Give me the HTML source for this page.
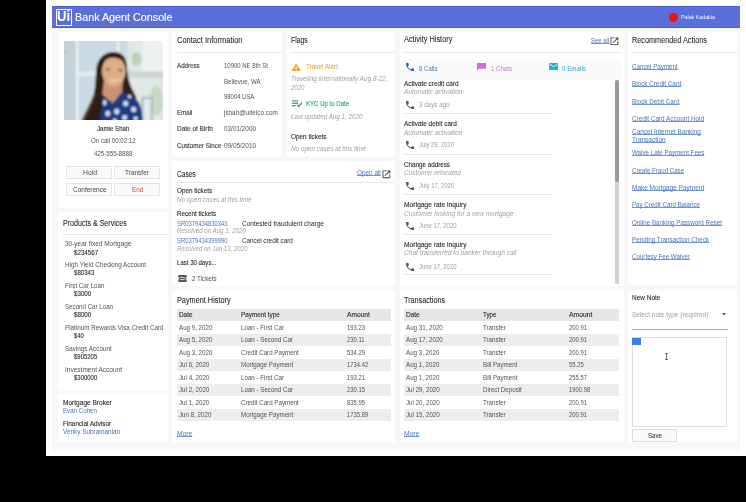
<!DOCTYPE html>
<html><head><meta charset="utf-8"><style>
html,body{margin:0;padding:0;width:746px;height:502px;overflow:hidden;background:#000;}
body{position:relative;font-family:"Liberation Sans",sans-serif;}
.t{position:absolute;white-space:nowrap;line-height:10px;}
.r{position:absolute;}
</style></head><body><div id="app" style="position:absolute;left:0;top:0;width:746px;height:502px;will-change:transform;background:#000">
<div class="r" style="left:46px;top:0px;width:700.00px;height:455.50px;background:#fff;"></div>
<div class="r" style="left:52px;top:6px;width:688.00px;height:443.60px;background:#f7f7fa;"></div>
<div class="r" style="left:52px;top:6px;width:688.00px;height:22.00px;background:#5b6fda;"></div>
<div class="r" style="left:52px;top:6px;width:688.00px;height:0.90px;background:#4a5cd8;"></div>
<div class="r" style="left:52px;top:27.1px;width:688.00px;height:0.90px;background:#4d5ecb;"></div>
<div class="r" style="left:55.5px;top:9px;width:16.50px;height:17.00px;background:transparent;border:1.7px solid #fff;box-sizing:border-box"></div>
<div class="t" style="left:57.3px;top:10.60px;font-size:14px;color:#fff;font-weight:bold;font-style:normal;transform:scaleX(0.9357);transform-origin:0 0;">Ui</div>
<div class="t" style="left:75px;top:12.10px;font-size:10.8px;color:#fff;font-weight:normal;font-style:normal;transform:scaleX(0.9965);transform-origin:0 0;-webkit-text-stroke:0.12px #fff;">Bank Agent Console</div>
<div class="r" style="left:668.8px;top:12.6px;width:9px;height:9px;border-radius:50%;background:#f41010"></div>
<div class="t" style="left:680.7px;top:12.80px;font-size:4.9px;color:#f4f5fc;font-weight:normal;font-style:normal;transform:scaleX(1.0837);transform-origin:0 0;">Palak Kadakia</div>
<div class="r" style="left:58px;top:32px;width:110.40px;height:175.60px;background:#fff;"></div>
<div class="r" style="left:58px;top:212.2px;width:110.40px;height:178.80px;background:#fff;"></div>
<div class="r" style="left:58px;top:394.3px;width:110.40px;height:48.00px;background:#fff;"></div>
<div class="r" style="left:172.4px;top:32px;width:109.30px;height:124.70px;background:#fff;"></div>
<div class="r" style="left:286.7px;top:32px;width:108.80px;height:124.70px;background:#fff;"></div>
<div class="r" style="left:172.4px;top:160.9px;width:222.60px;height:124.90px;background:#fff;"></div>
<div class="r" style="left:172.4px;top:290.4px;width:222.40px;height:152.10px;background:#fff;"></div>
<div class="r" style="left:400.1px;top:32px;width:223.90px;height:253.80px;background:#fff;"></div>
<div class="r" style="left:400.1px;top:290.4px;width:223.90px;height:152.10px;background:#fff;"></div>
<div class="r" style="left:628.4px;top:32px;width:108.60px;height:252.50px;background:#fff;"></div>
<div class="r" style="left:628.4px;top:289.6px;width:108.60px;height:152.90px;background:#fff;"></div>
<svg class="r" style="left:63.7px;top:40.5px" width="99.5" height="79.5" viewBox="0 0 100 80" preserveAspectRatio="none">
<defs><filter id="bl" x="-5%" y="-5%" width="110%" height="110%"><feGaussianBlur stdDeviation="0.9"/></filter><clipPath id="cp"><rect width="100" height="80"/></clipPath></defs>
<g clip-path="url(#cp)"><g filter="url(#bl)">
<rect x="-2" y="-2" width="104" height="84" fill="#c9dae3"/>
<rect x="-2" y="-2" width="14" height="84" fill="#c4d2d6"/>
<rect x="12" y="-2" width="2.4" height="84" fill="#f0f4f6"/>
<rect x="53.3" y="-2" width="2" height="13.5" fill="#eef3f5"/>
<rect x="14.4" y="30.5" width="22" height="5" fill="#e0eaee"/>
<circle cx="1.8" cy="11" r="1.2" fill="#e08a50"/>
<rect x="64" y="-2" width="38" height="84" fill="#e1e7e5"/>
<rect x="79" y="-2" width="23" height="33" fill="#eef1f1"/>
<ellipse cx="73" cy="18" rx="5" ry="7" fill="#bfcfbb"/>
<rect x="62" y="30.5" width="40" height="6.5" fill="#cbd6d1"/>
<ellipse cx="93" cy="60" rx="7" ry="15" fill="#c9d7c6"/>
<path d="M77.5 56 L89.5 56 L89.5 82 L77.5 82 Z" fill="#aebdca"/>
<rect x="80" y="58.5" width="7" height="24" fill="#e4e9ec"/>
<path d="M17 82 C21 72 27 63 30 53 C32 45 31.5 36 32.5 28 C33.5 18 40 11 50 11 C58 11 62.5 16 63 24 C63.5 32 64.5 38 67 45 C69 50 72 54 73 58 L62 64 L40 64 L38 82 Z" fill="#2f1f15"/>
<path d="M17 82 C21 72 27 63 30 53 L32 54 C29 64 24 73 20 82 Z" fill="#5a3c28"/>
<path d="M40 40 L59 40 L58.5 53 L49 63 L38.5 54 Z" fill="#c99373"/>
<ellipse cx="50" cy="30.5" rx="11.8" ry="15.5" fill="#ddae89"/>
<path d="M37.5 24 C39 15 45 12.5 50.5 12.5 C57 12.5 61.5 16 62.5 24 C58 18 53 16.5 47 17 C42 17.5 39 20 37.5 24 Z" fill="#2f1f15"/>
<ellipse cx="44" cy="28.5" rx="2.3" ry="0.9" fill="#4a3020"/><ellipse cx="56.5" cy="29.5" rx="2.3" ry="0.9" fill="#4a3020"/>
<path d="M45 37.5 C48 40.5 54 40.5 57 37.5 C55 41.8 47.5 41.8 45 37.5 Z" fill="#f6f1ea"/>
<path d="M37 82 C37 70 38 61 40 55 L49 63 L57.5 52 C64 52 71 56 75.5 62 C78 68 79 75 79 82 Z" fill="#1a3a80"/>
<g fill="#cfdaee">
<ellipse cx="41" cy="62" rx="1.8" ry="3"/><ellipse cx="44" cy="73" rx="2.4" ry="2.8"/><ellipse cx="53" cy="71" rx="2.6" ry="3"/>
<ellipse cx="62" cy="63" rx="2.6" ry="2.8"/><ellipse cx="70" cy="69" rx="2.6" ry="2.8"/><ellipse cx="61" cy="77" rx="2.6" ry="2.6"/>
<ellipse cx="72" cy="78" rx="2.2" ry="2.4"/><ellipse cx="51" cy="80" rx="2.2" ry="2"/><ellipse cx="66" cy="56" rx="1.8" ry="1.8"/>
</g>
</g></g></svg>
<div class="t" style="left:97.2px;top:123.90px;font-size:7px;color:#282828;font-weight:normal;font-style:normal;transform:scaleX(0.8764);transform-origin:0 0;-webkit-text-stroke:0.1px currentColor;">Jamie Shah</div>
<div class="t" style="left:91.1px;top:136.30px;font-size:6.8px;color:#525252;font-weight:normal;font-style:normal;transform:scaleX(0.9030);transform-origin:0 0;">On call 00:02:12</div>
<div class="t" style="left:94.3px;top:149.40px;font-size:6.8px;color:#525252;font-weight:normal;font-style:normal;transform:scaleX(0.9048);transform-origin:0 0;">425-555-8888</div>
<div class="r" style="left:66.3px;top:165.8px;width:45.80px;height:12.90px;background:#fafafa;border:0.7px solid #e6e6e6;box-sizing:border-box;"></div>
<div class="r" style="left:114.3px;top:165.8px;width:45.60px;height:12.90px;background:#fafafa;border:0.7px solid #e6e6e6;box-sizing:border-box;"></div>
<div class="r" style="left:66.3px;top:183.3px;width:45.80px;height:12.70px;background:#fafafa;border:0.7px solid #e6e6e6;box-sizing:border-box;"></div>
<div class="r" style="left:114.3px;top:183.3px;width:45.60px;height:12.70px;background:#fafafa;border:0.7px solid #e6e6e6;box-sizing:border-box;"></div>
<div class="t" style="left:82.8px;top:167.90px;font-size:6.8px;color:#474747;font-weight:normal;font-style:normal;transform:scaleX(0.9940);transform-origin:0 0;">Hold</div>
<div class="t" style="left:125.4px;top:167.90px;font-size:6.8px;color:#474747;font-weight:normal;font-style:normal;transform:scaleX(0.9536);transform-origin:0 0;">Transfer</div>
<div class="t" style="left:72.8px;top:184.80px;font-size:6.8px;color:#474747;font-weight:normal;font-style:normal;transform:scaleX(0.9533);transform-origin:0 0;">Conference</div>
<div class="t" style="left:131.8px;top:184.80px;font-size:6.8px;color:#b8582e;font-weight:normal;font-style:normal;transform:scaleX(0.9261);transform-origin:0 0;">End</div>
<div class="t" style="left:62.7px;top:217.60px;font-size:8.5px;color:#282828;font-weight:normal;font-style:normal;transform:scaleX(0.8336);transform-origin:0 0;-webkit-text-stroke:0.08px currentColor;">Products &amp; Services</div>
<div class="r" style="left:62.7px;top:234.1px;width:105.30px;height:0.60px;background:#e8e8e8;"></div>
<div class="t" style="left:64.8px;top:239.10px;font-size:6.8px;color:#525252;font-weight:normal;font-style:normal;transform:scaleX(0.9513);transform-origin:0 0;">30-year fixed Mortgage</div>
<div class="t" style="left:73.7px;top:247.50px;font-size:6.8px;color:#282828;font-weight:normal;font-style:normal;transform:scaleX(0.9105);transform-origin:0 0;-webkit-text-stroke:0.1px currentColor;">$234567</div>
<div class="t" style="left:64.8px;top:260.10px;font-size:6.8px;color:#525252;font-weight:normal;font-style:normal;transform:scaleX(0.9320);transform-origin:0 0;">High Yield Checking Account</div>
<div class="t" style="left:73.7px;top:268.40px;font-size:6.8px;color:#282828;font-weight:normal;font-style:normal;transform:scaleX(0.8992);transform-origin:0 0;-webkit-text-stroke:0.1px currentColor;">$80343</div>
<div class="t" style="left:64.8px;top:281.00px;font-size:6.8px;color:#525252;font-weight:normal;font-style:normal;transform:scaleX(0.9173);transform-origin:0 0;">First Car Loan</div>
<div class="t" style="left:73.7px;top:289.30px;font-size:6.8px;color:#282828;font-weight:normal;font-style:normal;transform:scaleX(0.9098);transform-origin:0 0;-webkit-text-stroke:0.1px currentColor;">$3000</div>
<div class="t" style="left:64.8px;top:301.60px;font-size:6.8px;color:#525252;font-weight:normal;font-style:normal;transform:scaleX(0.9073);transform-origin:0 0;">Second Car Loan</div>
<div class="t" style="left:73.7px;top:310.10px;font-size:6.8px;color:#282828;font-weight:normal;font-style:normal;transform:scaleX(0.9098);transform-origin:0 0;-webkit-text-stroke:0.1px currentColor;">$8000</div>
<div class="t" style="left:64.8px;top:322.70px;font-size:6.8px;color:#525252;font-weight:normal;font-style:normal;transform:scaleX(0.9234);transform-origin:0 0;">Platinum Rewards Visa Credit Card</div>
<div class="t" style="left:73.7px;top:331.10px;font-size:6.8px;color:#282828;font-weight:normal;font-style:normal;transform:scaleX(0.8463);transform-origin:0 0;-webkit-text-stroke:0.1px currentColor;">$40</div>
<div class="t" style="left:64.8px;top:343.80px;font-size:6.8px;color:#525252;font-weight:normal;font-style:normal;transform:scaleX(0.9291);transform-origin:0 0;">Savings Account</div>
<div class="t" style="left:73.7px;top:352.10px;font-size:6.8px;color:#282828;font-weight:normal;font-style:normal;transform:scaleX(0.8765);transform-origin:0 0;-webkit-text-stroke:0.1px currentColor;">$905205</div>
<div class="t" style="left:64.8px;top:364.60px;font-size:6.8px;color:#525252;font-weight:normal;font-style:normal;transform:scaleX(0.9608);transform-origin:0 0;">Investment Account</div>
<div class="t" style="left:73.7px;top:373.00px;font-size:6.8px;color:#282828;font-weight:normal;font-style:normal;transform:scaleX(0.8765);transform-origin:0 0;-webkit-text-stroke:0.1px currentColor;">$300000</div>
<div class="t" style="left:62.7px;top:398.30px;font-size:6.8px;color:#282828;font-weight:normal;font-style:normal;transform:scaleX(0.9640);transform-origin:0 0;-webkit-text-stroke:0.1px currentColor;">Mortgage Broker</div>
<div class="t" style="left:62.7px;top:406.40px;font-size:6.8px;color:#4677c0;font-weight:normal;font-style:normal;transform:scaleX(0.9086);transform-origin:0 0;">Evan Cohen</div>
<div class="t" style="left:62.7px;top:419.10px;font-size:6.8px;color:#282828;font-weight:normal;font-style:normal;transform:scaleX(0.9360);transform-origin:0 0;-webkit-text-stroke:0.1px currentColor;">Financial Advisor</div>
<div class="t" style="left:62.7px;top:427.00px;font-size:6.8px;color:#4677c0;font-weight:normal;font-style:normal;transform:scaleX(0.9401);transform-origin:0 0;">Venky Subramanian</div>
<div class="t" style="left:176.8px;top:35.30px;font-size:8.5px;color:#282828;font-weight:normal;font-style:normal;transform:scaleX(0.8829);transform-origin:0 0;-webkit-text-stroke:0.08px currentColor;">Contact Information</div>
<div class="r" style="left:176.8px;top:52px;width:105.00px;height:0.60px;background:#e8e8e8;"></div>
<div class="t" style="left:176.8px;top:60.80px;font-size:6.8px;color:#333;font-weight:normal;font-style:normal;transform:scaleX(0.9103);transform-origin:0 0;-webkit-text-stroke:0.1px currentColor;">Address</div>
<div class="t" style="left:224.2px;top:60.80px;font-size:6.8px;color:#525252;font-weight:normal;font-style:normal;transform:scaleX(0.8799);transform-origin:0 0;">10900 NE 8th St</div>
<div class="t" style="left:224.2px;top:76.60px;font-size:6.8px;color:#525252;font-weight:normal;font-style:normal;transform:scaleX(0.9051);transform-origin:0 0;">Bellevue, WA</div>
<div class="t" style="left:224.2px;top:91.50px;font-size:6.8px;color:#525252;font-weight:normal;font-style:normal;transform:scaleX(0.8716);transform-origin:0 0;">98004 USA</div>
<div class="t" style="left:176.8px;top:108.00px;font-size:6.8px;color:#333;font-weight:normal;font-style:normal;transform:scaleX(0.9059);transform-origin:0 0;-webkit-text-stroke:0.1px currentColor;">Email</div>
<div class="t" style="left:224.2px;top:108.00px;font-size:6.8px;color:#525252;font-weight:normal;font-style:normal;transform:scaleX(0.9334);transform-origin:0 0;">jshah@uitelco.com</div>
<div class="t" style="left:176.8px;top:124.10px;font-size:6.8px;color:#333;font-weight:normal;font-style:normal;transform:scaleX(0.9476);transform-origin:0 0;-webkit-text-stroke:0.1px currentColor;">Date of Birth</div>
<div class="t" style="left:224.2px;top:124.10px;font-size:6.8px;color:#525252;font-weight:normal;font-style:normal;transform:scaleX(0.9403);transform-origin:0 0;">03/01/2000</div>
<div class="t" style="left:176.8px;top:140.50px;font-size:6.8px;color:#333;font-weight:normal;font-style:normal;transform:scaleX(0.9181);transform-origin:0 0;-webkit-text-stroke:0.1px currentColor;">Customer Since</div>
<div class="t" style="left:224.2px;top:140.50px;font-size:6.8px;color:#525252;font-weight:normal;font-style:normal;transform:scaleX(0.9403);transform-origin:0 0;">09/05/2010</div>
<div class="t" style="left:290.8px;top:35.30px;font-size:8.5px;color:#282828;font-weight:normal;font-style:normal;transform:scaleX(0.8030);transform-origin:0 0;-webkit-text-stroke:0.08px currentColor;">Flags</div>
<div class="r" style="left:290.8px;top:52px;width:104.20px;height:0.60px;background:#e8e8e8;"></div>
<svg class="r" style="left:291.4px;top:62.6px" width="10.4" height="8.8" viewBox="0 0 12 10"><path d="M6 0.3 L11.8 9.8 H0.2 Z" fill="#f5a524"/><rect x="5.45" y="3.6" width="1.1" height="3.4" fill="#fff"/><rect x="5.45" y="7.7" width="1.1" height="1.1" fill="#fff"/></svg>
<div class="t" style="left:305.7px;top:62.10px;font-size:6.8px;color:#ea9a2c;font-weight:normal;font-style:normal;transform:scaleX(0.9348);transform-origin:0 0;">Travel Alert</div>
<div class="t" style="left:290.8px;top:74.10px;font-size:6.8px;color:#a0a0a0;font-weight:normal;font-style:italic;transform:scaleX(0.9434);transform-origin:0 0;">Traveling internationally Aug 8-22,</div>
<div class="t" style="left:290.8px;top:82.90px;font-size:6.8px;color:#a0a0a0;font-weight:normal;font-style:italic;transform:scaleX(0.8926);transform-origin:0 0;">2020</div>
<svg class="r" style="left:291.6px;top:100.4px" width="10.5" height="7.4" viewBox="0 0 13 9"><rect x="0" y="0.3" width="7.5" height="1.4" fill="#23996a"/><rect x="0" y="3.3" width="7.5" height="1.4" fill="#23996a"/><rect x="0" y="6.3" width="4.5" height="1.4" fill="#23996a"/><path d="M6.3 5.8 L8.3 7.8 L12.5 3.3" stroke="#23996a" stroke-width="1.5" fill="none"/></svg>
<div class="t" style="left:305.7px;top:99.30px;font-size:6.8px;color:#23996a;font-weight:normal;font-style:normal;transform:scaleX(0.8912);transform-origin:0 0;-webkit-text-stroke:0.1px currentColor;">KYC Up to Date</div>
<div class="t" style="left:290.8px;top:111.60px;font-size:6.8px;color:#a0a0a0;font-weight:normal;font-style:italic;transform:scaleX(0.9200);transform-origin:0 0;">Last updated Aug 1, 2020</div>
<div class="t" style="left:290.8px;top:131.70px;font-size:6.8px;color:#282828;font-weight:normal;font-style:normal;transform:scaleX(0.9396);transform-origin:0 0;-webkit-text-stroke:0.1px currentColor;">Open tickets</div>
<div class="t" style="left:290.8px;top:143.80px;font-size:6.8px;color:#a0a0a0;font-weight:normal;font-style:italic;transform:scaleX(0.9352);transform-origin:0 0;">No open cases at this time</div>
<div class="t" style="left:176.8px;top:169.00px;font-size:8.5px;color:#282828;font-weight:normal;font-style:normal;transform:scaleX(0.7720);transform-origin:0 0;-webkit-text-stroke:0.08px currentColor;">Cases</div>
<div class="t" style="left:357.3px;top:167.80px;font-size:6.8px;color:#4677c0;font-weight:normal;font-style:normal;transform:scaleX(0.9397);transform-origin:0 0;text-decoration:underline;text-decoration-thickness:0.55px;text-underline-offset:0.2px;text-decoration-color:#6f95d0;text-decoration-skip-ink:none;">Open all</div>
<svg class="r" style="left:382.3px;top:170.4px" width="8.8" height="8.6" viewBox="2 2 20 20"><path fill="#3a3a3a" d="M19 19H5V5h7V3H5c-1.11 0-2 .9-2 2v14c0 1.1.89 2 2 2h14c1.1 0 2-.9 2-2v-7h-2v7zM14 3v2h3.59l-9.83 9.83 1.41 1.41L19 6.41V10h2V3h-7z"/></svg>
<div class="r" style="left:176.8px;top:181.8px;width:217.70px;height:0.60px;background:#e8e8e8;"></div>
<div class="t" style="left:176.8px;top:186.40px;font-size:6.8px;color:#282828;font-weight:normal;font-style:normal;transform:scaleX(0.9317);transform-origin:0 0;-webkit-text-stroke:0.1px currentColor;">Open tickets</div>
<div class="t" style="left:176.8px;top:194.90px;font-size:6.8px;color:#a0a0a0;font-weight:normal;font-style:italic;transform:scaleX(0.9302);transform-origin:0 0;">No open cases at this time</div>
<div class="t" style="left:176.8px;top:208.90px;font-size:6.8px;color:#282828;font-weight:normal;font-style:normal;transform:scaleX(0.9160);transform-origin:0 0;-webkit-text-stroke:0.1px currentColor;">Recent tickets</div>
<div class="t" style="left:176.6px;top:218.50px;font-size:6.8px;color:#4677c0;font-weight:normal;font-style:normal;transform:scaleX(0.8619);transform-origin:0 0;">SR0379434830343</div>
<div class="t" style="left:242.2px;top:218.50px;font-size:6.8px;color:#282828;font-weight:normal;font-style:normal;transform:scaleX(0.9548);transform-origin:0 0;">Contested fraudulent charge</div>
<div class="t" style="left:176.6px;top:226.10px;font-size:6.8px;color:#a0a0a0;font-weight:normal;font-style:italic;transform:scaleX(0.9028);transform-origin:0 0;">Resolved on Aug 1, 2020</div>
<div class="t" style="left:176.6px;top:236.40px;font-size:6.8px;color:#4677c0;font-weight:normal;font-style:normal;transform:scaleX(0.8619);transform-origin:0 0;">SR0379434399990</div>
<div class="t" style="left:242.2px;top:236.40px;font-size:6.8px;color:#282828;font-weight:normal;font-style:normal;transform:scaleX(0.9273);transform-origin:0 0;">Cancel credit card</div>
<div class="t" style="left:176.6px;top:243.90px;font-size:6.8px;color:#a0a0a0;font-weight:normal;font-style:italic;transform:scaleX(0.8913);transform-origin:0 0;">Resolved on Jun 13, 2020</div>
<div class="t" style="left:176.8px;top:258.30px;font-size:6.8px;color:#282828;font-weight:normal;font-style:normal;transform:scaleX(0.8933);transform-origin:0 0;-webkit-text-stroke:0.1px currentColor;">Last 30 days...</div>
<svg class="r" style="left:178.4px;top:274.9px" width="9" height="7" viewBox="0 0 9 7"><path d="M0.3 0 H8.7 V2.4 A1.1 1.1 0 0 0 8.7 4.6 V7 H0.3 V4.6 A1.1 1.1 0 0 0 0.3 2.4 Z" fill="#5c5c5c"/><rect x="2.2" y="2.2" width="4.6" height="0.7" fill="#fff"/><rect x="2.2" y="4.1" width="4.6" height="0.7" fill="#fff"/></svg>
<div class="t" style="left:191.7px;top:273.60px;font-size:6.8px;color:#525252;font-weight:normal;font-style:normal;transform:scaleX(0.9169);transform-origin:0 0;">2 Tickets</div>
<div class="t" style="left:176.8px;top:294.70px;font-size:8.5px;color:#282828;font-weight:normal;font-style:normal;transform:scaleX(0.8595);transform-origin:0 0;-webkit-text-stroke:0.08px currentColor;">Payment History</div>
<div class="r" style="left:176.5px;top:308.9px;width:214.50px;height:11.90px;background:#e6e6e6;"></div>
<div class="t" style="left:178.8px;top:310.40px;font-size:6.8px;color:#282828;font-weight:normal;font-style:normal;transform:scaleX(0.9402);transform-origin:0 0;-webkit-text-stroke:0.1px currentColor;">Date</div>
<div class="t" style="left:241.2px;top:310.40px;font-size:6.8px;color:#282828;font-weight:normal;font-style:normal;transform:scaleX(0.9311);transform-origin:0 0;-webkit-text-stroke:0.1px currentColor;">Payment type</div>
<div class="t" style="left:347.2px;top:310.40px;font-size:6.8px;color:#282828;font-weight:normal;font-style:normal;transform:scaleX(0.9771);transform-origin:0 0;-webkit-text-stroke:0.1px currentColor;">Amount</div>
<div class="t" style="left:178.8px;top:322.70px;font-size:6.8px;color:#525252;font-weight:normal;font-style:normal;transform:scaleX(0.9100);transform-origin:0 0;">Aug 9, 2020</div>
<div class="t" style="left:241.2px;top:322.70px;font-size:6.8px;color:#525252;font-weight:normal;font-style:normal;transform:scaleX(0.9100);transform-origin:0 0;">Loan - First Car</div>
<div class="t" style="left:347.2px;top:322.70px;font-size:6.8px;color:#525252;font-weight:normal;font-style:normal;transform:scaleX(0.8600);transform-origin:0 0;">193.23</div>
<div class="r" style="left:176.5px;top:333.87px;width:214.50px;height:11.87px;background:#ededed;"></div>
<div class="t" style="left:178.8px;top:335.17px;font-size:6.8px;color:#525252;font-weight:normal;font-style:normal;transform:scaleX(0.9100);transform-origin:0 0;">Aug 5, 2020</div>
<div class="t" style="left:241.2px;top:335.17px;font-size:6.8px;color:#525252;font-weight:normal;font-style:normal;transform:scaleX(0.9100);transform-origin:0 0;">Loan - Second Car</div>
<div class="t" style="left:347.2px;top:335.17px;font-size:6.8px;color:#525252;font-weight:normal;font-style:normal;transform:scaleX(0.8600);transform-origin:0 0;">230.11</div>
<div class="t" style="left:178.8px;top:347.64px;font-size:6.8px;color:#525252;font-weight:normal;font-style:normal;transform:scaleX(0.9100);transform-origin:0 0;">Aug 3, 2020</div>
<div class="t" style="left:241.2px;top:347.64px;font-size:6.8px;color:#525252;font-weight:normal;font-style:normal;transform:scaleX(0.9100);transform-origin:0 0;">Credit Card Payment</div>
<div class="t" style="left:347.2px;top:347.64px;font-size:6.8px;color:#525252;font-weight:normal;font-style:normal;transform:scaleX(0.8600);transform-origin:0 0;">534.29</div>
<div class="r" style="left:176.5px;top:358.81px;width:214.50px;height:11.87px;background:#ededed;"></div>
<div class="t" style="left:178.8px;top:360.11px;font-size:6.8px;color:#525252;font-weight:normal;font-style:normal;transform:scaleX(0.9100);transform-origin:0 0;">Jul 6, 2020</div>
<div class="t" style="left:241.2px;top:360.11px;font-size:6.8px;color:#525252;font-weight:normal;font-style:normal;transform:scaleX(0.9100);transform-origin:0 0;">Mortgage Payment</div>
<div class="t" style="left:347.2px;top:360.11px;font-size:6.8px;color:#525252;font-weight:normal;font-style:normal;transform:scaleX(0.8600);transform-origin:0 0;">1734.42</div>
<div class="t" style="left:178.8px;top:372.58px;font-size:6.8px;color:#525252;font-weight:normal;font-style:normal;transform:scaleX(0.9100);transform-origin:0 0;">Jul 4, 2020</div>
<div class="t" style="left:241.2px;top:372.58px;font-size:6.8px;color:#525252;font-weight:normal;font-style:normal;transform:scaleX(0.9100);transform-origin:0 0;">Loan - First Car</div>
<div class="t" style="left:347.2px;top:372.58px;font-size:6.8px;color:#525252;font-weight:normal;font-style:normal;transform:scaleX(0.8600);transform-origin:0 0;">193.21</div>
<div class="r" style="left:176.5px;top:383.75px;width:214.50px;height:11.87px;background:#ededed;"></div>
<div class="t" style="left:178.8px;top:385.05px;font-size:6.8px;color:#525252;font-weight:normal;font-style:normal;transform:scaleX(0.9100);transform-origin:0 0;">Jul 2, 2020</div>
<div class="t" style="left:241.2px;top:385.05px;font-size:6.8px;color:#525252;font-weight:normal;font-style:normal;transform:scaleX(0.9100);transform-origin:0 0;">Loan - Second Car</div>
<div class="t" style="left:347.2px;top:385.05px;font-size:6.8px;color:#525252;font-weight:normal;font-style:normal;transform:scaleX(0.8600);transform-origin:0 0;">230.15</div>
<div class="t" style="left:178.8px;top:397.52px;font-size:6.8px;color:#525252;font-weight:normal;font-style:normal;transform:scaleX(0.9100);transform-origin:0 0;">Jul 1, 2020</div>
<div class="t" style="left:241.2px;top:397.52px;font-size:6.8px;color:#525252;font-weight:normal;font-style:normal;transform:scaleX(0.9100);transform-origin:0 0;">Credit Card Payment</div>
<div class="t" style="left:347.2px;top:397.52px;font-size:6.8px;color:#525252;font-weight:normal;font-style:normal;transform:scaleX(0.8600);transform-origin:0 0;">835.95</div>
<div class="r" style="left:176.5px;top:408.69px;width:214.50px;height:11.87px;background:#ededed;"></div>
<div class="t" style="left:178.8px;top:409.99px;font-size:6.8px;color:#525252;font-weight:normal;font-style:normal;transform:scaleX(0.9100);transform-origin:0 0;">Jun 8, 2020</div>
<div class="t" style="left:241.2px;top:409.99px;font-size:6.8px;color:#525252;font-weight:normal;font-style:normal;transform:scaleX(0.9100);transform-origin:0 0;">Mortgage Payment</div>
<div class="t" style="left:347.2px;top:409.99px;font-size:6.8px;color:#525252;font-weight:normal;font-style:normal;transform:scaleX(0.8600);transform-origin:0 0;">1735.89</div>
<div class="t" style="left:176.5px;top:428.70px;font-size:6.8px;color:#4677c0;font-weight:normal;font-style:normal;transform:scaleX(0.9871);transform-origin:0 0;text-decoration:underline;text-decoration-thickness:0.55px;text-underline-offset:0.2px;text-decoration-color:#6f95d0;text-decoration-skip-ink:none;">More</div>
<div class="t" style="left:404.3px;top:294.70px;font-size:8.5px;color:#282828;font-weight:normal;font-style:normal;transform:scaleX(0.8502);transform-origin:0 0;-webkit-text-stroke:0.08px currentColor;">Transactions</div>
<div class="r" style="left:404px;top:308.9px;width:214.60px;height:11.90px;background:#e6e6e6;"></div>
<div class="t" style="left:406.1px;top:310.40px;font-size:6.8px;color:#282828;font-weight:normal;font-style:normal;transform:scaleX(0.9541);transform-origin:0 0;-webkit-text-stroke:0.1px currentColor;">Date</div>
<div class="t" style="left:483.3px;top:310.40px;font-size:6.8px;color:#282828;font-weight:normal;font-style:normal;transform:scaleX(0.9085);transform-origin:0 0;-webkit-text-stroke:0.1px currentColor;">Type</div>
<div class="t" style="left:568.7px;top:310.40px;font-size:6.8px;color:#282828;font-weight:normal;font-style:normal;transform:scaleX(0.9984);transform-origin:0 0;-webkit-text-stroke:0.1px currentColor;">Amount</div>
<div class="t" style="left:406.1px;top:322.70px;font-size:6.8px;color:#525252;font-weight:normal;font-style:normal;transform:scaleX(0.9100);transform-origin:0 0;">Aug 31, 2020</div>
<div class="t" style="left:483.3px;top:322.70px;font-size:6.8px;color:#525252;font-weight:normal;font-style:normal;transform:scaleX(0.9100);transform-origin:0 0;">Transfer</div>
<div class="t" style="left:568.7px;top:322.70px;font-size:6.8px;color:#525252;font-weight:normal;font-style:normal;transform:scaleX(0.8600);transform-origin:0 0;">200.91</div>
<div class="r" style="left:404px;top:333.87px;width:214.60px;height:11.87px;background:#ededed;"></div>
<div class="t" style="left:406.1px;top:335.17px;font-size:6.8px;color:#525252;font-weight:normal;font-style:normal;transform:scaleX(0.9100);transform-origin:0 0;">Aug 17, 2020</div>
<div class="t" style="left:483.3px;top:335.17px;font-size:6.8px;color:#525252;font-weight:normal;font-style:normal;transform:scaleX(0.9100);transform-origin:0 0;">Transfer</div>
<div class="t" style="left:568.7px;top:335.17px;font-size:6.8px;color:#525252;font-weight:normal;font-style:normal;transform:scaleX(0.8600);transform-origin:0 0;">200.91</div>
<div class="t" style="left:406.1px;top:347.64px;font-size:6.8px;color:#525252;font-weight:normal;font-style:normal;transform:scaleX(0.9100);transform-origin:0 0;">Aug 3, 2020</div>
<div class="t" style="left:483.3px;top:347.64px;font-size:6.8px;color:#525252;font-weight:normal;font-style:normal;transform:scaleX(0.9100);transform-origin:0 0;">Transfer</div>
<div class="t" style="left:568.7px;top:347.64px;font-size:6.8px;color:#525252;font-weight:normal;font-style:normal;transform:scaleX(0.8600);transform-origin:0 0;">200.91</div>
<div class="r" style="left:404px;top:358.81px;width:214.60px;height:11.87px;background:#ededed;"></div>
<div class="t" style="left:406.1px;top:360.11px;font-size:6.8px;color:#525252;font-weight:normal;font-style:normal;transform:scaleX(0.9100);transform-origin:0 0;">Aug 1, 2020</div>
<div class="t" style="left:483.3px;top:360.11px;font-size:6.8px;color:#525252;font-weight:normal;font-style:normal;transform:scaleX(0.9100);transform-origin:0 0;">Bill Payment</div>
<div class="t" style="left:568.7px;top:360.11px;font-size:6.8px;color:#525252;font-weight:normal;font-style:normal;transform:scaleX(0.8600);transform-origin:0 0;">55.25</div>
<div class="t" style="left:406.1px;top:372.58px;font-size:6.8px;color:#525252;font-weight:normal;font-style:normal;transform:scaleX(0.9100);transform-origin:0 0;">Aug 1, 2020</div>
<div class="t" style="left:483.3px;top:372.58px;font-size:6.8px;color:#525252;font-weight:normal;font-style:normal;transform:scaleX(0.9100);transform-origin:0 0;">Bill Payment</div>
<div class="t" style="left:568.7px;top:372.58px;font-size:6.8px;color:#525252;font-weight:normal;font-style:normal;transform:scaleX(0.8600);transform-origin:0 0;">255.57</div>
<div class="r" style="left:404px;top:383.75px;width:214.60px;height:11.87px;background:#ededed;"></div>
<div class="t" style="left:406.1px;top:385.05px;font-size:6.8px;color:#525252;font-weight:normal;font-style:normal;transform:scaleX(0.9100);transform-origin:0 0;">Jul 29, 2020</div>
<div class="t" style="left:483.3px;top:385.05px;font-size:6.8px;color:#525252;font-weight:normal;font-style:normal;transform:scaleX(0.9100);transform-origin:0 0;">Direct Deposit</div>
<div class="t" style="left:568.7px;top:385.05px;font-size:6.8px;color:#525252;font-weight:normal;font-style:normal;transform:scaleX(0.8600);transform-origin:0 0;">1900.98</div>
<div class="t" style="left:406.1px;top:397.52px;font-size:6.8px;color:#525252;font-weight:normal;font-style:normal;transform:scaleX(0.9100);transform-origin:0 0;">Jul 20, 2020</div>
<div class="t" style="left:483.3px;top:397.52px;font-size:6.8px;color:#525252;font-weight:normal;font-style:normal;transform:scaleX(0.9100);transform-origin:0 0;">Transfer</div>
<div class="t" style="left:568.7px;top:397.52px;font-size:6.8px;color:#525252;font-weight:normal;font-style:normal;transform:scaleX(0.8600);transform-origin:0 0;">200.91</div>
<div class="r" style="left:404px;top:408.69px;width:214.60px;height:11.87px;background:#ededed;"></div>
<div class="t" style="left:406.1px;top:409.99px;font-size:6.8px;color:#525252;font-weight:normal;font-style:normal;transform:scaleX(0.9100);transform-origin:0 0;">Jul 15, 2020</div>
<div class="t" style="left:483.3px;top:409.99px;font-size:6.8px;color:#525252;font-weight:normal;font-style:normal;transform:scaleX(0.9100);transform-origin:0 0;">Transfer</div>
<div class="t" style="left:568.7px;top:409.99px;font-size:6.8px;color:#525252;font-weight:normal;font-style:normal;transform:scaleX(0.8600);transform-origin:0 0;">200.91</div>
<div class="t" style="left:404px;top:428.70px;font-size:6.8px;color:#4677c0;font-weight:normal;font-style:normal;transform:scaleX(0.9871);transform-origin:0 0;text-decoration:underline;text-decoration-thickness:0.55px;text-underline-offset:0.2px;text-decoration-color:#6f95d0;text-decoration-skip-ink:none;">More</div>
<div class="t" style="left:404px;top:34.30px;font-size:8.5px;color:#282828;font-weight:normal;font-style:normal;transform:scaleX(0.8684);transform-origin:0 0;-webkit-text-stroke:0.08px currentColor;">Activity History</div>
<div class="t" style="left:590.9px;top:36.00px;font-size:6.8px;color:#4677c0;font-weight:normal;font-style:normal;transform:scaleX(0.8751);transform-origin:0 0;text-decoration:underline;text-decoration-thickness:0.55px;text-underline-offset:0.2px;text-decoration-color:#6f95d0;text-decoration-skip-ink:none;">See all</div>
<svg class="r" style="left:609.9000000000001px;top:36.7px" width="8.8" height="8.6" viewBox="2 2 20 20"><path fill="#3a3a3a" d="M19 19H5V5h7V3H5c-1.11 0-2 .9-2 2v14c0 1.1.89 2 2 2h14c1.1 0 2-.9 2-2v-7h-2v7zM14 3v2h3.59l-9.83 9.83 1.41 1.41L19 6.41V10h2V3h-7z"/></svg>
<div class="r" style="left:404px;top:52px;width:217.00px;height:0.60px;background:#e8e8e8;"></div>
<div class="r" style="left:400.1px;top:59px;width:221.40px;height:20.50px;background:#fafafa;"></div>
<svg class="r" style="left:405.7px;top:63px" width="8.4" height="8" viewBox="3 3 18 18" preserveAspectRatio="none"><path fill="#2a62b3" d="M6.6 10.8c1.4 2.8 3.8 5.1 6.6 6.6l2.2-2.2c.3-.3.7-.4 1-.2 1.1.4 2.3.6 3.6.6.6 0 1 .4 1 1V20c0 .6-.4 1-1 1C10.6 21 3 13.4 3 4c0-.6.4-1 1-1h3.5c.6 0 1 .4 1 1 0 1.3.2 2.5.6 3.6.1.3 0 .7-.2 1l-2.3 2.2z"/></svg>
<div class="t" style="left:418.6px;top:64.00px;font-size:6.8px;color:#4a7fc4;font-weight:normal;font-style:normal;transform:scaleX(0.8902);transform-origin:0 0;">8 Calls</div>
<svg class="r" style="left:476.8px;top:62.7px" width="9.3" height="7.8" viewBox="0 0 10 8.4"><path d="M0 0 H10 V6.3 H2 L0 8.4 Z" fill="#d56fe0"/></svg>
<div class="t" style="left:490.5px;top:64.00px;font-size:6.8px;color:#c47ccc;font-weight:normal;font-style:normal;transform:scaleX(0.8960);transform-origin:0 0;">1 Chats</div>
<svg class="r" style="left:548.6px;top:63px" width="9.3" height="7.2" viewBox="0 0 10 8"><rect width="10" height="8" fill="#20aee0"/><path d="M0.6 1.2 L5 4.2 L9.4 1.2" stroke="#fff" stroke-width="0.9" fill="none"/></svg>
<div class="t" style="left:561.8px;top:64.00px;font-size:6.8px;color:#28a8d8;font-weight:normal;font-style:normal;transform:scaleX(0.9170);transform-origin:0 0;">0 Emails</div>
<div class="t" style="left:404px;top:78.80px;font-size:6.8px;color:#282828;font-weight:normal;font-style:normal;transform:scaleX(0.9430);transform-origin:0 0;-webkit-text-stroke:0.1px currentColor;">Activate credit card</div>
<div class="t" style="left:404px;top:87.20px;font-size:6.8px;color:#a0a0a0;font-weight:normal;font-style:italic;transform:scaleX(0.9617);transform-origin:0 0;">Automatic activation</div>
<svg class="r" style="left:406px;top:101.39999999999999px" width="8.4" height="8" viewBox="3 3 18 18" preserveAspectRatio="none"><path fill="#555" d="M6.6 10.8c1.4 2.8 3.8 5.1 6.6 6.6l2.2-2.2c.3-.3.7-.4 1-.2 1.1.4 2.3.6 3.6.6.6 0 1 .4 1 1V20c0 .6-.4 1-1 1C10.6 21 3 13.4 3 4c0-.6.4-1 1-1h3.5c.6 0 1 .4 1 1 0 1.3.2 2.5.6 3.6.1.3 0 .7-.2 1l-2.3 2.2z"/></svg>
<div class="t" style="left:418.6px;top:100.40px;font-size:6.8px;color:#a0a0a0;font-weight:normal;font-style:normal;transform:scaleX(0.9199);transform-origin:0 0;">3 days ago</div>
<div class="r" style="left:404px;top:113.0px;width:148.00px;height:0.60px;background:#e8e8e8;"></div>
<div class="t" style="left:404px;top:119.40px;font-size:6.8px;color:#282828;font-weight:normal;font-style:normal;transform:scaleX(0.9424);transform-origin:0 0;-webkit-text-stroke:0.1px currentColor;">Activate debit card</div>
<div class="t" style="left:404px;top:127.70px;font-size:6.8px;color:#a0a0a0;font-weight:normal;font-style:italic;transform:scaleX(0.9617);transform-origin:0 0;">Automatic activation</div>
<svg class="r" style="left:406px;top:141.29999999999998px" width="8.4" height="8" viewBox="3 3 18 18" preserveAspectRatio="none"><path fill="#555" d="M6.6 10.8c1.4 2.8 3.8 5.1 6.6 6.6l2.2-2.2c.3-.3.7-.4 1-.2 1.1.4 2.3.6 3.6.6.6 0 1 .4 1 1V20c0 .6-.4 1-1 1C10.6 21 3 13.4 3 4c0-.6.4-1 1-1h3.5c.6 0 1 .4 1 1 0 1.3.2 2.5.6 3.6.1.3 0 .7-.2 1l-2.3 2.2z"/></svg>
<div class="t" style="left:418.6px;top:140.30px;font-size:6.8px;color:#a0a0a0;font-weight:normal;font-style:normal;transform:scaleX(0.8631);transform-origin:0 0;">July 29, 2020</div>
<div class="r" style="left:404px;top:153.7px;width:148.00px;height:0.60px;background:#e8e8e8;"></div>
<div class="t" style="left:404px;top:159.80px;font-size:6.8px;color:#282828;font-weight:normal;font-style:normal;transform:scaleX(0.9220);transform-origin:0 0;-webkit-text-stroke:0.1px currentColor;">Change address</div>
<div class="t" style="left:404px;top:168.00px;font-size:6.8px;color:#a0a0a0;font-weight:normal;font-style:italic;transform:scaleX(0.9610);transform-origin:0 0;">Customer relocated</div>
<svg class="r" style="left:406px;top:181.5px" width="8.4" height="8" viewBox="3 3 18 18" preserveAspectRatio="none"><path fill="#555" d="M6.6 10.8c1.4 2.8 3.8 5.1 6.6 6.6l2.2-2.2c.3-.3.7-.4 1-.2 1.1.4 2.3.6 3.6.6.6 0 1 .4 1 1V20c0 .6-.4 1-1 1C10.6 21 3 13.4 3 4c0-.6.4-1 1-1h3.5c.6 0 1 .4 1 1 0 1.3.2 2.5.6 3.6.1.3 0 .7-.2 1l-2.3 2.2z"/></svg>
<div class="t" style="left:418.6px;top:180.50px;font-size:6.8px;color:#a0a0a0;font-weight:normal;font-style:normal;transform:scaleX(0.8730);transform-origin:0 0;">July 17, 2020</div>
<div class="r" style="left:404px;top:193.6px;width:148.00px;height:0.60px;background:#e8e8e8;"></div>
<div class="t" style="left:404px;top:200.30px;font-size:6.8px;color:#282828;font-weight:normal;font-style:normal;transform:scaleX(0.9730);transform-origin:0 0;-webkit-text-stroke:0.1px currentColor;">Mortgage rate inquiry</div>
<div class="t" style="left:404px;top:208.50px;font-size:6.8px;color:#a0a0a0;font-weight:normal;font-style:italic;transform:scaleX(0.9661);transform-origin:0 0;">Customer looking for a new mortgage</div>
<svg class="r" style="left:406px;top:222.0px" width="8.4" height="8" viewBox="3 3 18 18" preserveAspectRatio="none"><path fill="#555" d="M6.6 10.8c1.4 2.8 3.8 5.1 6.6 6.6l2.2-2.2c.3-.3.7-.4 1-.2 1.1.4 2.3.6 3.6.6.6 0 1 .4 1 1V20c0 .6-.4 1-1 1C10.6 21 3 13.4 3 4c0-.6.4-1 1-1h3.5c.6 0 1 .4 1 1 0 1.3.2 2.5.6 3.6.1.3 0 .7-.2 1l-2.3 2.2z"/></svg>
<div class="t" style="left:418.6px;top:221.00px;font-size:6.8px;color:#a0a0a0;font-weight:normal;font-style:normal;transform:scaleX(0.8702);transform-origin:0 0;">June 17, 2020</div>
<div class="r" style="left:404px;top:233.7px;width:148.00px;height:0.60px;background:#e8e8e8;"></div>
<div class="t" style="left:404px;top:240.10px;font-size:6.8px;color:#282828;font-weight:normal;font-style:normal;transform:scaleX(0.9730);transform-origin:0 0;-webkit-text-stroke:0.1px currentColor;">Mortgage rate inquiry</div>
<div class="t" style="left:404px;top:248.30px;font-size:6.8px;color:#a0a0a0;font-weight:normal;font-style:italic;transform:scaleX(0.9667);transform-origin:0 0;">Chat transferred to banker through call</div>
<svg class="r" style="left:406px;top:262.5px" width="8.4" height="8" viewBox="3 3 18 18" preserveAspectRatio="none"><path fill="#555" d="M6.6 10.8c1.4 2.8 3.8 5.1 6.6 6.6l2.2-2.2c.3-.3.7-.4 1-.2 1.1.4 2.3.6 3.6.6.6 0 1 .4 1 1V20c0 .6-.4 1-1 1C10.6 21 3 13.4 3 4c0-.6.4-1 1-1h3.5c.6 0 1 .4 1 1 0 1.3.2 2.5.6 3.6.1.3 0 .7-.2 1l-2.3 2.2z"/></svg>
<div class="t" style="left:418.6px;top:261.50px;font-size:6.8px;color:#a0a0a0;font-weight:normal;font-style:normal;transform:scaleX(0.8702);transform-origin:0 0;">June 17, 2020</div>
<div class="r" style="left:404px;top:274.2px;width:148.00px;height:0.60px;background:#e8e8e8;"></div>
<div class="r" style="left:400.4px;top:279px;width:214px;height:5.6px;overflow:hidden"><div class="t" style="left:3.6px;top:4.2px;font-size:6.8px;color:#2e2e2e;letter-spacing:-0.25px;-webkit-text-stroke:0.18px currentColor;">Mortgage rate inquiry</div></div>
<div class="r" style="left:615.4px;top:181px;width:3.60px;height:102.50px;background:#d2d2d2;"></div>
<div class="r" style="left:615.4px;top:79.8px;width:3.60px;height:102.00px;background:#999999;border-radius:1.5px"></div>
<div class="t" style="left:631.6px;top:35.30px;font-size:8.5px;color:#282828;font-weight:normal;font-style:normal;transform:scaleX(0.8568);transform-origin:0 0;-webkit-text-stroke:0.08px currentColor;">Recommended Actions</div>
<div class="r" style="left:631.6px;top:52.2px;width:105.40px;height:0.60px;background:#e8e8e8;"></div>
<div class="t" style="left:631.7px;top:62.00px;font-size:6.8px;color:#4677c0;font-weight:normal;font-style:normal;transform:scaleX(0.9183);transform-origin:0 0;text-decoration:underline;text-decoration-thickness:0.55px;text-underline-offset:0.2px;text-decoration-color:#6f95d0;text-decoration-skip-ink:none;">Cancel Payment</div>
<div class="t" style="left:631.7px;top:79.30px;font-size:6.8px;color:#4677c0;font-weight:normal;font-style:normal;transform:scaleX(0.9293);transform-origin:0 0;text-decoration:underline;text-decoration-thickness:0.55px;text-underline-offset:0.2px;text-decoration-color:#6f95d0;text-decoration-skip-ink:none;">Block Credit Card</div>
<div class="t" style="left:631.7px;top:96.70px;font-size:6.8px;color:#4677c0;font-weight:normal;font-style:normal;transform:scaleX(0.9314);transform-origin:0 0;text-decoration:underline;text-decoration-thickness:0.55px;text-underline-offset:0.2px;text-decoration-color:#6f95d0;text-decoration-skip-ink:none;">Block Debit Card</div>
<div class="t" style="left:631.7px;top:113.70px;font-size:6.8px;color:#4677c0;font-weight:normal;font-style:normal;transform:scaleX(0.9400);transform-origin:0 0;text-decoration:underline;text-decoration-thickness:0.55px;text-underline-offset:0.2px;text-decoration-color:#6f95d0;text-decoration-skip-ink:none;">Credit Card Account Hold</div>
<div class="t" style="left:631.7px;top:127.00px;font-size:6.8px;color:#4677c0;font-weight:normal;font-style:normal;transform:scaleX(0.9497);transform-origin:0 0;text-decoration:underline;text-decoration-thickness:0.55px;text-underline-offset:0.2px;text-decoration-color:#6f95d0;text-decoration-skip-ink:none;">Cancel Internet Banking</div>
<div class="t" style="left:631.7px;top:135.10px;font-size:6.8px;color:#4677c0;font-weight:normal;font-style:normal;transform:scaleX(0.9556);transform-origin:0 0;text-decoration:underline;text-decoration-thickness:0.55px;text-underline-offset:0.2px;text-decoration-color:#6f95d0;text-decoration-skip-ink:none;">Transaction</div>
<div class="t" style="left:631.7px;top:148.40px;font-size:6.8px;color:#4677c0;font-weight:normal;font-style:normal;transform:scaleX(0.9110);transform-origin:0 0;text-decoration:underline;text-decoration-thickness:0.55px;text-underline-offset:0.2px;text-decoration-color:#6f95d0;text-decoration-skip-ink:none;">Waive Late Payment Fees</div>
<div class="t" style="left:631.7px;top:165.70px;font-size:6.8px;color:#4677c0;font-weight:normal;font-style:normal;transform:scaleX(0.9012);transform-origin:0 0;text-decoration:underline;text-decoration-thickness:0.55px;text-underline-offset:0.2px;text-decoration-color:#6f95d0;text-decoration-skip-ink:none;">Create Fraud Case</div>
<div class="t" style="left:631.7px;top:183.00px;font-size:6.8px;color:#4677c0;font-weight:normal;font-style:normal;transform:scaleX(0.9508);transform-origin:0 0;text-decoration:underline;text-decoration-thickness:0.55px;text-underline-offset:0.2px;text-decoration-color:#6f95d0;text-decoration-skip-ink:none;">Make Mortgage Payment</div>
<div class="t" style="left:631.7px;top:200.30px;font-size:6.8px;color:#4677c0;font-weight:normal;font-style:normal;transform:scaleX(0.9089);transform-origin:0 0;text-decoration:underline;text-decoration-thickness:0.55px;text-underline-offset:0.2px;text-decoration-color:#6f95d0;text-decoration-skip-ink:none;">Pay Credit Card Balance</div>
<div class="t" style="left:631.7px;top:217.50px;font-size:6.8px;color:#4677c0;font-weight:normal;font-style:normal;transform:scaleX(0.9232);transform-origin:0 0;text-decoration:underline;text-decoration-thickness:0.55px;text-underline-offset:0.2px;text-decoration-color:#6f95d0;text-decoration-skip-ink:none;">Online Banking Password Reset</div>
<div class="t" style="left:631.7px;top:234.80px;font-size:6.8px;color:#4677c0;font-weight:normal;font-style:normal;transform:scaleX(0.9287);transform-origin:0 0;text-decoration:underline;text-decoration-thickness:0.55px;text-underline-offset:0.2px;text-decoration-color:#6f95d0;text-decoration-skip-ink:none;">Pending Transaction Check</div>
<div class="t" style="left:631.7px;top:252.10px;font-size:6.8px;color:#4677c0;font-weight:normal;font-style:normal;transform:scaleX(0.9105);transform-origin:0 0;text-decoration:underline;text-decoration-thickness:0.55px;text-underline-offset:0.2px;text-decoration-color:#6f95d0;text-decoration-skip-ink:none;">Courtesy Fee Waiver</div>
<div class="t" style="left:631.8px;top:292.50px;font-size:6.8px;color:#282828;font-weight:normal;font-style:normal;transform:scaleX(0.9516);transform-origin:0 0;-webkit-text-stroke:0.1px currentColor;">New Note</div>
<div class="t" style="left:631.8px;top:309.50px;font-size:6.8px;color:#a0a0a0;font-weight:normal;font-style:normal;transform:scaleX(0.9524);transform-origin:0 0;">Select note type (required)</div>
<svg class="r" style="left:721.6px;top:313px" width="4" height="2.6" viewBox="0 0 4 2.6"><path d="M0 0 H4 L2 2.6 Z" fill="#555"/></svg>
<div class="r" style="left:631.6px;top:328.5px;width:96.20px;height:0.70px;background:#b0b0b0;"></div>
<div class="r" style="left:631.6px;top:337.4px;width:95.90px;height:89.20px;background:#fff;border:0.7px solid #dcdcdc;box-sizing:border-box"></div>
<div class="r" style="left:632.4px;top:338.2px;width:8.60px;height:7.00px;background:#3d7fe0;"></div>
<svg class="r" style="left:664.6px;top:352.6px" width="3" height="7" viewBox="0 0 3 7"><path d="M0 0.4 H3 M1.5 0.4 V6.6 M0 6.6 H3" stroke="#333" stroke-width="0.7" fill="none"/></svg>
<div class="r" style="left:631.9px;top:429.3px;width:44.90px;height:13.10px;background:#fafafa;border:0.7px solid #dcdcdc;box-sizing:border-box"></div>
<div class="t" style="left:647.7px;top:430.80px;font-size:6.8px;color:#282828;font-weight:normal;font-style:normal;transform:scaleX(0.8968);transform-origin:0 0;">Save</div>
</div></body></html>
